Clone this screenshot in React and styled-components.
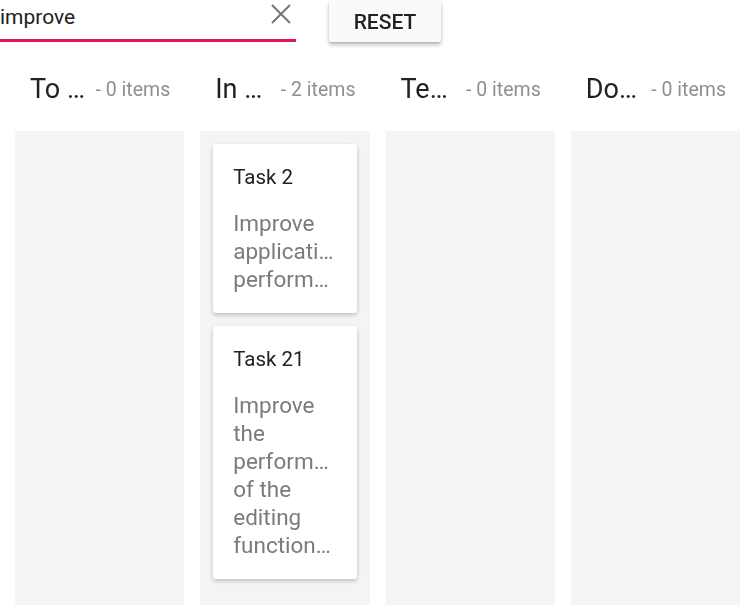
import styled, { createGlobalStyle } from 'styled-components';

const GlobalStyle = createGlobalStyle`
  body {
    margin: 0;
    background: #fff;
    font-family: Roboto, 'Liberation Sans', sans-serif;
  }
`;

const Page = styled.div`
  width: 746px;
  height: 608px;
  overflow: hidden;
`;

const Toolbar = styled.div`
  display: flex;
  align-items: flex-start;
  height: 43px;
`;

const SearchBox = styled.div`
  display: flex;
  align-items: center;
  width: 296px;
  height: 39px;
  border-bottom: 3px solid #e3165b;
  box-sizing: content-box;
`;

const SearchInput = styled.input`
  flex: 1;
  min-width: 0;
  border: none;
  outline: none;
  padding: 0;
  margin-top: -6px;
  height: 28px;
  font-family: Roboto, 'Liberation Sans', sans-serif;
  font-size: 21px;
  color: #212121;
  background: transparent;
  caret-color: #000;
`;

const ClearBtn = styled.button`
  display: flex;
  align-items: center;
  justify-content: center;
  border: none;
  background: none;
  padding: 0;
  width: 24px;
  height: 24px;
  margin: -11px 3px 0 0;
  cursor: pointer;
`;

const ResetBtn = styled.button`
  margin-left: 33px;
  width: 112px;
  height: 42px;
  border: none;
  border-radius: 2px;
  background: #fafafa;
  box-shadow: 0 3px 4px rgba(0, 0, 0, 0.24), 0 1px 2px rgba(0, 0, 0, 0.12);
  font-family: Roboto, 'Liberation Sans', sans-serif;
  font-size: 21px;
  font-weight: 500;
  color: #212121;
  padding: 0;
  padding-top: 1px;
  cursor: pointer;
`;

const Board = styled.div`
  display: grid;
  grid-template-columns: repeat(4, 1fr);
  column-gap: 16px;
  padding: 0 6px 0 15px;
`;

const Column = styled.div`
  display: flex;
  flex-direction: column;
  min-width: 0;
`;

const Header = styled.div`
  display: flex;
  align-items: center;
  height: 88px;
  padding: 4px 14px 0 15px;
  box-sizing: border-box;
`;

const Title = styled.span`
  flex: 1;
  min-width: 0;
  white-space: nowrap;
  overflow: hidden;
  text-overflow: ellipsis;
  font-size: 27px;
  color: #212121;
`;

const Count = styled.span`
  margin-left: 10px;
  white-space: nowrap;
  font-size: 19.5px;
  color: #8f8f8f;
`;

const Lane = styled.div`
  display: flex;
  flex-direction: column;
  gap: 13px;
  height: 474px;
  padding: 13px;
  box-sizing: border-box;
  background: #f4f4f4;
`;

const Card = styled.div`
  background: #fff;
  border-radius: 3px;
  padding: 20px;
  box-shadow: 0 2px 4px rgba(0, 0, 0, 0.22);
`;

const CardTitle = styled.div`
  font-size: 20.5px;
  line-height: 26px;
  color: #222;
  margin-bottom: 19px;
  white-space: nowrap;
  overflow: hidden;
  text-overflow: ellipsis;
`;

const CardText = styled.div`
  font-size: 22.5px;
  line-height: 28px;
  color: #7b7b7b;
  overflow: hidden;
  text-overflow: ellipsis;
`;

const columns = [
  { title: 'To Do', cards: [] },
  {
    title: 'In Progress',
    cards: [
      { id: 'Task 2', text: 'Improve application performance' },
      { id: 'Task 21', text: 'Improve the performance of the editing functionality' },
    ],
  },
  { title: 'Testing', cards: [] },
  { title: 'Done', cards: [] },
];

const CloseIcon = () => (
  <svg width="22" height="22" viewBox="0 0 22 22">
    <path d="M2 2 L20 20 M20 2 L2 20" stroke="#757575" strokeWidth="2" fill="none" />
  </svg>
);

const App = () => (
  <Page>
    <GlobalStyle />
    <Toolbar>
      <SearchBox>
        <SearchInput defaultValue="improve" autoFocus />
        <ClearBtn aria-label="clear">
          <CloseIcon />
        </ClearBtn>
      </SearchBox>
      <ResetBtn>RESET</ResetBtn>
    </Toolbar>
    <Board>
      {columns.map(col => (
        <Column key={col.title}>
          <Header>
            <Title>{col.title}</Title>
            <Count>- {col.cards.length} items</Count>
          </Header>
          <Lane>
            {col.cards.map(card => (
              <Card key={card.id}>
                <CardTitle>{card.id}</CardTitle>
                <CardText>{card.text}</CardText>
              </Card>
            ))}
          </Lane>
        </Column>
      ))}
    </Board>
  </Page>
);

export default App;
